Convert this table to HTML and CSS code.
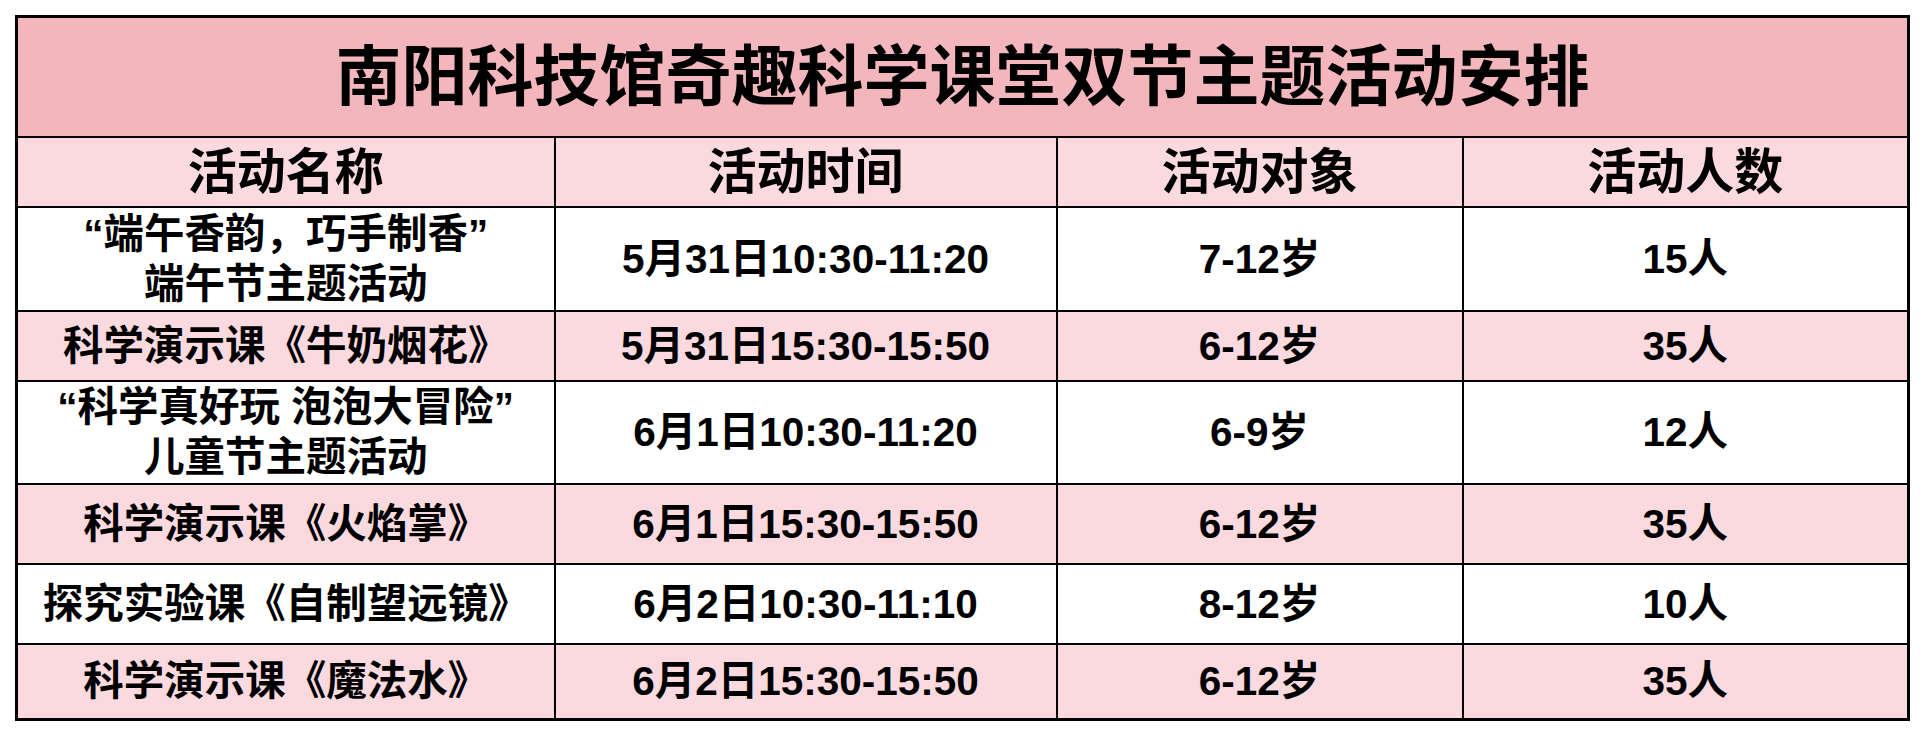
FILE: index.html
```html
<!DOCTYPE html>
<html lang="zh-CN">
<head>
<meta charset="utf-8">
<title>南阳科技馆奇趣科学课堂双节主题活动安排</title>
<link rel="stylesheet" href="styles.css">
</head>
<body>
<table class="schedule">
  <colgroup>
    <col class="c1"><col class="c2"><col class="c3"><col class="c4">
  </colgroup>
  <tr class="r-title"><th colspan="4" class="title">南阳科技馆奇趣科学课堂双节主题活动安排</th></tr>
  <tr class="r-head head">
    <th>活动名称</th><th>活动时间</th><th>活动对象</th><th>活动人数</th>
  </tr>
  <tr class="r-2line">
    <td>“端午香韵，巧手制香”<br>端午节主题活动</td><td>5月31日10:30-11:20</td><td>7-12岁</td><td>15人</td>
  </tr>
  <tr class="r-1 alt">
    <td>科学演示课《牛奶烟花》</td><td>5月31日15:30-15:50</td><td>6-12岁</td><td>35人</td>
  </tr>
  <tr class="r-2line b">
    <td>“科学真好玩 泡泡大冒险”<br>儿童节主题活动</td><td>6月1日10:30-11:20</td><td>6-9岁</td><td>12人</td>
  </tr>
  <tr class="r-2 alt">
    <td>科学演示课《火焰掌》</td><td>6月1日15:30-15:50</td><td>6-12岁</td><td>35人</td>
  </tr>
  <tr class="r-2">
    <td>探究实验课《自制望远镜》</td><td>6月2日10:30-11:10</td><td>8-12岁</td><td>10人</td>
  </tr>
  <tr class="r-3 alt">
    <td>科学演示课《魔法水》</td><td>6月2日15:30-15:50</td><td>6-12岁</td><td>35人</td>
  </tr>
</table>
</body>
</html>
```
FILE: styles.css
```css
html, body {
  margin: 0;
  padding: 0;
  background: #ffffff;
}
body {
  padding: 15px 0 0 15px;
  font-family: "Liberation Sans", "Noto Sans CJK SC", sans-serif;
  color: #000;
}
.schedule {
  border-collapse: collapse;
  table-layout: fixed;
  width: 1894px;
  border: 3px solid #000;
}
.c1 { width: 538px; }
.c2 { width: 502px; }
.c3 { width: 406px; }
.c4 { width: 446px; }
.schedule th,
.schedule td {
  border: 2px solid #000;
  padding: 0;
  text-align: center;
  vertical-align: middle;
  font-weight: 700;
}
.title {
  background: #f4b6bd;
  font-size: 66px;
  line-height: 80px;
  font-weight: 700;
}
.head th {
  background: #fad9df;
  font-size: 49px;
  line-height: 56px;
  font-weight: 700;
}
.schedule td {
  font-size: 40.5px;
  line-height: 50px;
}
.alt td { background: #fad9df; }
.r-title { height: 120px; }
.r-head { height: 70px; }
.r-2line { height: 104px; }
.r-2line.b { height: 103px; }
.r-1 { height: 70px; }
.r-2 { height: 80px; }
.r-3 { height: 76px; }
```
